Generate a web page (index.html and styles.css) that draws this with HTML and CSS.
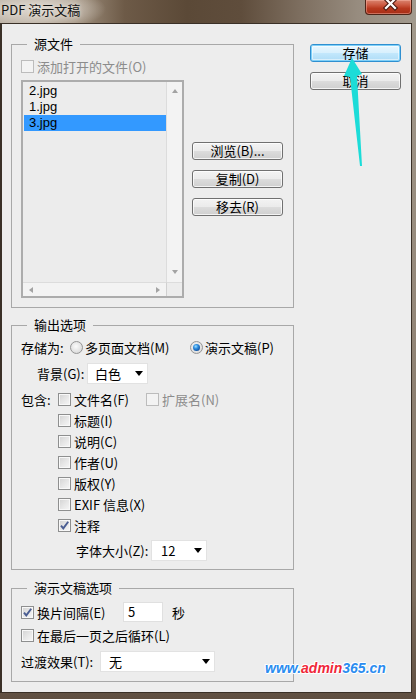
FILE: index.html
```html
<!DOCTYPE html>
<html lang="zh-CN">
<head>
<meta charset="utf-8">
<title>PDF 演示文稿</title>
<link rel="stylesheet" href="styles.css">
</head>
<body>
<div class="window">
  <div class="titlebar">
    <span class="title">PDF 演示文稿</span>
    <span class="close">
      <svg width="47" height="15" viewBox="0 0 47 15">
        <path d="M21 -1 L30 8 M30 -1 L21 8" stroke="#4a1a12" stroke-width="4.4" stroke-linecap="square" fill="none"/>
        <path d="M21 -1 L30 8 M30 -1 L21 8" stroke="#ffffff" stroke-width="2.2" stroke-linecap="square" fill="none"/>
      </svg>
    </span>
  </div>
  <div class="client">
    <div class="left">
      <fieldset class="group g1">
        <legend>源文件</legend>
        <div class="row r-add disabled"><span class="cb cb-dis"></span>添加打开的文件(O)</div>
        <div class="src-body">
          <div class="listbox">
            <ul class="items">
              <li>2.jpg</li>
              <li>1.jpg</li>
              <li class="sel">3.jpg</li>
            </ul>
            <div class="vscroll"><span class="tri tri-up"></span><span class="tri tri-down"></span></div>
            <div class="hscroll"><span class="tri tri-left"></span><span class="tri tri-right"></span></div>
            <div class="corner"></div>
          </div>
          <div class="side-btns">
            <button class="btn">浏览(B)...</button>
            <button class="btn">复制(D)</button>
            <button class="btn">移去(R)</button>
          </div>
        </div>
      </fieldset>

      <fieldset class="group g2">
        <legend>输出选项</legend>
        <div class="row r-save">
          <span class="lbl w-save">存储为:</span>
          <span class="opt w-opt1"><span class="rd"></span>多页面文档(M)</span>
          <span class="opt"><span class="rd rd-on"></span>演示文稿(P)</span>
        </div>
        <div class="row r-bg">
          <span class="lbl w-bg">背景(G):</span>
          <span class="select s-bg"><span class="sv">白色</span><span class="dd"></span></span>
        </div>
        <div class="checks">
          <div class="row r-chk">
            <span class="lbl w-inc">包含:</span>
            <span class="opt w-opt2"><span class="cb"></span>文件名(F)</span>
            <span class="opt disabled"><span class="cb cb-dis"></span>扩展名(N)</span>
          </div>
          <div class="row r-chk ind"><span class="cb"></span>标题(I)</div>
          <div class="row r-chk ind"><span class="cb"></span>说明(C)</div>
          <div class="row r-chk ind"><span class="cb"></span>作者(U)</div>
          <div class="row r-chk ind"><span class="cb"></span>版权(Y)</div>
          <div class="row r-chk ind"><span class="cb"></span>EXIF 信息(X)</div>
          <div class="row r-chk ind"><span class="cb cb-on"><svg width="11" height="11" viewBox="0 0 11 11"><path d="M2 5.6 L4.3 8.4 L9.2 1.8" stroke="#4a5d92" stroke-width="1.9" fill="none"/></svg></span>注释</div>
        </div>
        <div class="row r-font">
          <span class="lbl w-font">字体大小(Z):</span>
          <span class="select s-font"><span class="sv sv-num">12</span><span class="dd"></span></span>
        </div>
      </fieldset>

      <fieldset class="group g3">
        <legend>演示文稿选项</legend>
        <div class="row r-int">
          <span class="opt w-opt3"><span class="cb cb-on"><svg width="11" height="11" viewBox="0 0 11 11"><path d="M2 5.6 L4.3 8.4 L9.2 1.8" stroke="#4a5d92" stroke-width="1.9" fill="none"/></svg></span>换片间隔(E)</span>
          <span class="input">5</span>
          <span class="unit">秒</span>
        </div>
        <div class="row r-loop"><span class="cb"></span>在最后一页之后循环(L)</div>
        <div class="row r-trans">
          <span class="lbl w-trans">过渡效果(T):</span>
          <span class="select s-trans"><span class="sv">无</span><span class="dd"></span></span>
        </div>
      </fieldset>
    </div>
    <div class="right">
      <button class="btn btn-default">存储</button>
      <button class="btn">取消</button>
    </div>
  </div>

  <svg class="arrow" width="416" height="699" viewBox="0 0 416 699">
    <polygon points="352,58 362,74 357,76 362,166 360,166 350,77 344,76" fill="#1cdcd8"/>
  </svg>
  <div class="watermark"><span class="wb">www.</span><span class="wr">admin</span><span class="wb">365.cn</span></div>
</div>
</body>
</html>
```

FILE: styles.css
```css
* { box-sizing: border-box; }

html, body {
  margin: 0;
  padding: 0;
}

body {
  font-family: "Noto Sans CJK SC", "Noto Sans", sans-serif;
  font-size: 13px;
  color: #000;
  background: #6a5a4a;
}

.window {
  position: relative;
  width: 416px;
  height: 699px;
  display: flex;
  flex-direction: column;
  background: linear-gradient(180deg, #a39a8d 0%, #938779 45%, #7c6d5e 85%, #5f4f41 100%);
  overflow: hidden;
}

/* ---------- title bar ---------- */
.titlebar {
  height: 23px;
  flex: none;
  display: flex;
  align-items: flex-start;
  background:
    radial-gradient(ellipse 70px 22px at 36px 9px, rgba(226, 220, 212, 0.95) 0%, rgba(214, 206, 196, 0.7) 55%, rgba(200, 190, 178, 0) 100%),
    linear-gradient(90deg, #b2a89b 0%, #a0917f 18%, #6d5a47 30%, #5b4937 45%, #5f4d3c 58%, #7d6e5f 72%, #978c7f 86%, #a29a8e 100%);
}

.title {
  padding-left: 1px;
  line-height: 20px;
  font-size: 13px;
  color: #111;
  text-shadow: 0 0 4px rgba(240, 236, 230, 0.9);
}

.close {
  margin-left: auto;
  margin-right: 4px;
  width: 47px;
  height: 15px;
  border: 1px solid #4e2418;
  border-top: none;
  border-radius: 0 0 4px 4px;
  background: linear-gradient(180deg, #d9846f 0%, #cc5a42 35%, #b8391f 60%, #a52d16 100%);
  box-shadow: inset 0 0 0 1px rgba(255, 190, 175, 0.45);
  overflow: hidden;
  display: block;
}

.close svg {
  display: block;
  margin: 0 0 0 -1px;
}

/* ---------- client area ---------- */
.client {
  flex: 1;
  margin: 0 4px 6px 0;
  border: 1px solid #3a3027;
  border-left-width: 2px;
  background: #ededed;
  display: flex;
  align-items: flex-start;
  padding: 13px 0 0 9px;
}

.left {
  width: 283px;
  display: flex;
  flex-direction: column;
}

.right {
  width: 91px;
  margin-left: 16px;
  padding-top: 7px;
  display: flex;
  flex-direction: column;
  gap: 10px;
}

/* ---------- group boxes ---------- */
.group {
  margin: 0;
  min-width: 0;
  border: 1px solid #a8a8a8;
  padding: 0 9px 9px 9px;
}

.group legend {
  margin-left: 6px;
  padding: 0 7px;
  line-height: 14px;
  font-size: 13px;
}

.g1 { padding-bottom: 9px; }
.g2 { margin-top: 10px; padding-bottom: 8px; }
.g3 { margin-top: 11px; padding-bottom: 9px; }

.row {
  display: flex;
  align-items: center;
  height: 20px;
  white-space: nowrap;
}

.disabled { color: #8c8c8c; }

.lbl { flex: none; }
.opt { display: flex; align-items: center; flex: none; }

/* checkboxes */
.cb {
  width: 13px;
  height: 13px;
  flex: none;
  margin-right: 3px;
  border: 1px solid #8e8f8f;
  background: linear-gradient(135deg, #d2d2d2 0%, #e6e6e6 50%, #f7f7f7 100%);
  box-shadow: inset 0 0 0 1px #f8f8f8;
  display: flex;
  align-items: center;
  justify-content: center;
}

.cb-dis {
  border-color: #bcbcbc;
  background: #f3f3f3;
  box-shadow: none;
}

.cb svg { display: block; }

/* radios */
.rd {
  width: 13px;
  height: 13px;
  flex: none;
  margin-right: 2px;
  border-radius: 50%;
  border: 1px solid #959595;
  background: radial-gradient(circle at 45% 40%, #fbfbfb 0%, #e4e4e4 55%, #cfcfcf 100%);
  display: flex;
  align-items: center;
  justify-content: center;
}

.rd-on::after {
  content: "";
  width: 7px;
  height: 7px;
  border-radius: 50%;
  background: radial-gradient(circle at 40% 35%, #9fe0ff 0%, #2f8ee0 35%, #10509e 75%, #0b3a7a 100%);
}

/* ---------- group 1 ---------- */
.r-add { margin-top: 5px; }

.src-body {
  margin-top: 4px;
  display: flex;
  align-items: flex-start;
}

.listbox {
  width: 163px;
  height: 218px;
  flex: none;
  border: 2px solid #acacac;
  background: #ececec;
  display: grid;
  grid-template-columns: 143px 16px;
  grid-template-rows: 1fr 14px;
}

.items {
  list-style: none;
  margin: 0;
  padding: 1px 0 0 1px;
  overflow: hidden;
}

.items li {
  height: 16px;
  line-height: 16px;
  padding-left: 5px;
  font-family: "Liberation Sans", sans-serif;
  font-size: 13px;
}

.items li.sel { background: #3399ff; }

.vscroll {
  background: #f3f3f3;
  border-left: 1px solid #dcdcdc;
  display: flex;
  flex-direction: column;
  align-items: center;
  justify-content: space-between;
  padding: 7px 0 8px;
}

.hscroll {
  background: #f3f3f3;
  border-top: 1px solid #dcdcdc;
  display: flex;
  align-items: center;
  justify-content: space-between;
  padding: 0 6px;
}

.corner {
  background: #ececec;
  border-left: 1px solid #d0d0d0;
  border-top: 1px solid #dcdcdc;
}

.tri { width: 0; height: 0; display: block; }
.tri-up { border-left: 3.5px solid transparent; border-right: 3.5px solid transparent; border-bottom: 4px solid #a3a3a3; }
.tri-down { border-left: 3.5px solid transparent; border-right: 3.5px solid transparent; border-top: 4px solid #a3a3a3; }
.tri-left { border-top: 3.5px solid transparent; border-bottom: 3.5px solid transparent; border-right: 4px solid #a3a3a3; }
.tri-right { border-top: 3.5px solid transparent; border-bottom: 3.5px solid transparent; border-left: 4px solid #a3a3a3; }

.side-btns {
  margin-left: 8px;
  padding-top: 62px;
  display: flex;
  flex-direction: column;
  gap: 10px;
}

/* ---------- buttons ---------- */
.btn {
  width: 91px;
  height: 18px;
  padding: 0;
  border: 1px solid #707070;
  border-radius: 3px;
  background: linear-gradient(180deg, #f3f3f3 0%, #ebebeb 48%, #dcdcdc 52%, #cfcfcf 100%);
  box-shadow: inset 0 0 0 1px rgba(255, 255, 255, 0.75);
  font-family: inherit;
  font-size: 13px;
  line-height: 16px;
  color: #000;
  text-align: center;
}

.btn-default {
  border-color: #2f8fd0;
  background: linear-gradient(180deg, #eaf7fe 0%, #d8f0fd 48%, #c2e7fc 52%, #aedcf6 100%);
  box-shadow: inset 0 0 0 1px #7fd0f8, inset 0 0 0 2px rgba(255, 255, 255, 0.5);
}

/* ---------- group 2 ---------- */
.r-save { margin-top: 5px; }
.w-save { width: 49px; }
.w-opt1 { width: 120px; }

.r-bg { margin-top: 6px; height: 21px; padding-left: 16px; }
.w-bg { width: 50px; }

.select {
  height: 21px;
  display: flex;
  align-items: center;
  justify-content: space-between;
  background: #fff;
  border: 1px solid #e2e2e2;
  padding: 0 4px 0 7px;
  flex: none;
}

.dd {
  width: 0;
  height: 0;
  border-left: 4px solid transparent;
  border-right: 4px solid transparent;
  border-top: 5px solid #000;
}

.s-bg { width: 61px; }
.s-font { width: 56px; }
.s-trans { width: 115px; padding-left: 8px; }
.sv-num { padding-left: 2px; }

.checks {
  margin-top: 5px;
  display: flex;
  flex-direction: column;
}

.r-chk { height: 21px; }
.ind { padding-left: 37px; }
.w-inc { width: 37px; }
.w-opt2 { width: 88px; }

.r-font { margin-top: 4px; height: 21px; padding-left: 55px; }
.w-font { width: 75px; }

/* ---------- group 3 ---------- */
.r-int { margin-top: 7px; }
.w-opt3 { width: 102px; }

.input {
  width: 40px;
  height: 20px;
  flex: none;
  background: #fff;
  border: 1px solid #e0e0e0;
  padding-left: 4px;
  line-height: 18px;
}

.unit { margin-left: 9px; }

.r-loop { margin-top: 3px; }

.r-trans { margin-top: 6px; height: 21px; }
.w-trans { width: 79px; }

/* ---------- overlays ---------- */
.arrow {
  position: absolute;
  left: 0;
  top: 0;
  pointer-events: none;
}

.watermark {
  position: absolute;
  left: 265px;
  top: 660px;
  font-family: "Liberation Sans", sans-serif;
  font-weight: bold;
  font-style: italic;
  font-size: 14px;
  line-height: 16px;
  letter-spacing: 0;
  text-shadow: 1px 0 #fff, -1px 0 #fff, 0 1px #fff, 0 -1px #fff, 1px 1px #fff, -1px -1px #fff;
}

.wb { color: #2a8cf0; }
.wr { color: #f0283a; }
```
